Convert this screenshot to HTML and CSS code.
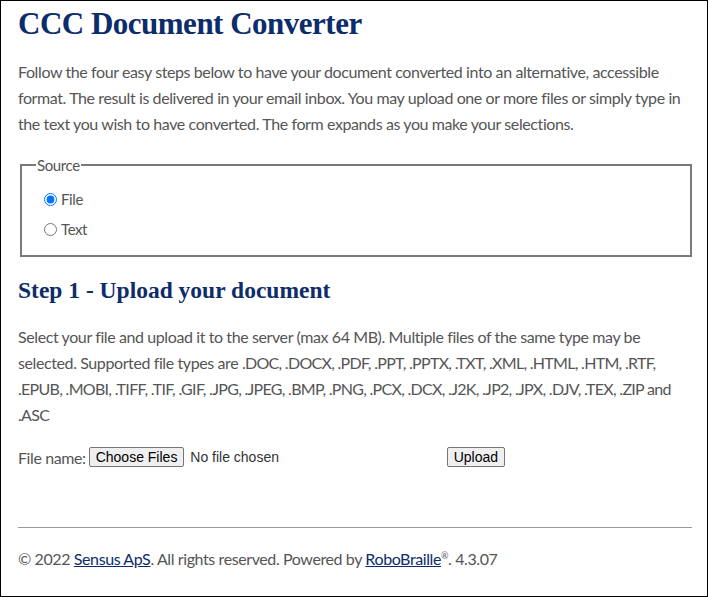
FILE: index.html
```html
<!DOCTYPE html>
<html lang="en">
<head>
  <meta charset="UTF-8" />
  <title>CCC Document Converter</title>
  <link rel="stylesheet" href="styles.css">
</head>
<body>
<div class="page">
  <h1>CCC Document Converter</h1>
  <p class="intro">Follow the four easy steps below to have your document converted into an alternative, accessible format. The result is delivered in your email inbox. You may upload one or more files or simply type in the text you wish to have converted. The form expands as you make your selections.</p>

  <fieldset class="source">
    <legend>Source</legend>
    <label class="opt"><input type="radio" name="source" value="file" checked> File</label>
    <label class="opt"><input type="radio" name="source" value="text"> Text</label>
  </fieldset>

  <h2>Step 1 - Upload your document</h2>
  <p class="intro step">Select your file and upload it to the server (max 64 MB). Multiple files of the same type may be selected. Supported file types are <span class="types">.DOC, .DOCX, .PDF, .PPT, .PPTX, .TXT, .XML, .HTML, .HTM, .RTF, .EPUB, .MOBI, .TIFF, .TIF, .GIF, .JPG, .JPEG, .BMP, .PNG, .PCX, .DCX, .J2K, .JP2, .JPX, .DJV, .TEX, .ZIP and .ASC</span></p>

  <div class="upload-row">
    <label for="files">File name:</label>
    <span class="file-pick"><button type="button" id="files" class="btn">Choose Files</button> No file chosen</span>
    <button type="button" class="btn">Upload</button>
  </div>

  <hr>
  <p class="footer">&copy; 2022 <a href="#">Sensus ApS</a>. All rights reserved. Powered by <a href="#">RoboBraille</a><sup>&reg;</sup>. 4.3.07</p>
</div>
</body>
</html>
```

FILE: styles.css
```css
html, body {
  margin: 0;
  height: 100%;
}
body {
  font-family: Lato, 'Liberation Sans', sans-serif;
  letter-spacing: -0.4px;
  color: #555;
  background: #fff;
  border: 1px solid #000;
  box-sizing: border-box;
  overflow: hidden;
}
.page {
  padding: 0 15px 0 17px;
}
h1 {
  font-family: 'Liberation Serif', serif;
  font-size: 31px;
  letter-spacing: -0.5px;
  color: #0c2c6a;
  margin: 4px 0 0 0;
  line-height: 38px;
}
h2 {
  font-family: 'Liberation Serif', serif;
  font-size: 23.5px;
  letter-spacing: 0;
  color: #0c2c6a;
  margin: 18px 0 0 0;
  line-height: 30px;
}
.intro {
  font-size: 16px;
  line-height: 26px;
  margin: 16px 0 0 0;
}
.intro.step {
  margin-top: 19px;
}
/* the list of extensions sets a bit tighter so it wraps like the original */
.types {
  letter-spacing: -0.7px;
}
.source {
  margin: 19px 0 0 2px;
  padding: 10px 0 11px 20px;
  border: 2px solid #7a7a7a;
}
.source legend {
  font-size: 15px;
  padding: 0 1px;
  margin-left: -6px;
}
.opt {
  display: flex;
  align-items: center;
  font-size: 15px;
  line-height: 30px;
}
.opt input {
  margin: 0 4px 0 2px;
}
.upload-row {
  display: flex;
  align-items: center;
  margin-top: 19px;
  font-size: 16px;
}
.file-pick {
  margin-left: 3px;
  font-family: 'Liberation Sans', Arial, sans-serif;
  letter-spacing: 0;
  font-size: 14px;
  color: #333;
  width: 358px;
}
.btn {
  font-family: 'Liberation Sans', Arial, sans-serif;
  letter-spacing: 0;
  font-size: 14px;
  color: #000;
  background: #efefef;
  border: 1px solid #767676;
  border-radius: 2px;
  padding: 1px 6px;
  margin-right: 2px;
}
hr {
  border: 0;
  border-top: 1px solid #999;
  margin: 60px 0 0 0;
}
.footer {
  font-size: 16px;
  margin: 21px 0 0 0;
}
.footer a {
  color: #0c2c6a;
}
.footer sup {
  font-size: 9px;
}
```
